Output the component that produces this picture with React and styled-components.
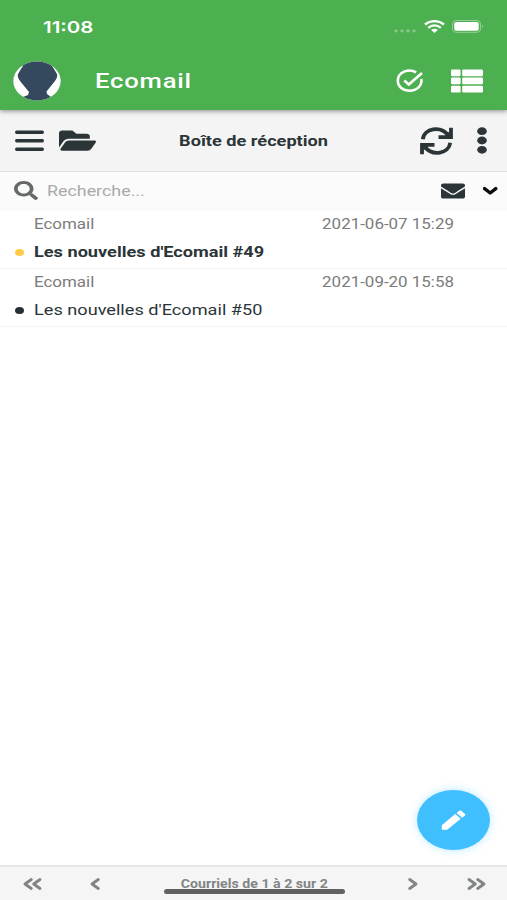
import React from "react";
import styled, { createGlobalStyle } from "styled-components";
import { FaFolderOpen, FaSearch, FaEnvelope } from "react-icons/fa";

const GlobalStyle = createGlobalStyle`
  *, *::before, *::after { box-sizing: border-box; }
  html, body { margin: 0; background: #fff; }
  body { font-family: Roboto, "Liberation Sans", sans-serif; color: #2b3538; }
`;

const Screen = styled.main`
  width: 507px;
  height: 900px;
  display: flex;
  flex-direction: column;
  position: relative;
  overflow: hidden;
  background: #fff;
`;

const Label = styled.span`
  display: block;
  flex: none;
  white-space: nowrap;
  font-size: ${(p) => p.$size || 14}px;
  line-height: 20px;
  font-weight: ${(p) => p.$weight || 400};
  color: ${(p) => p.$color || "inherit"};
  letter-spacing: ${(p) => p.$spacing || 0}px;
  transform: scaleX(${(p) => p.$stretch || 1.21});
  transform-origin: ${(p) => p.$origin || "left"} center;
`;

const Icon = styled.svg.attrs({ preserveAspectRatio: "none", "aria-hidden": true })`
  display: block;
  flex: none;
  width: ${(p) => p.$w}px;
  height: ${(p) => p.$h}px;
`;

const Header = styled.header`
  flex: none;
  height: 110px;
  background: #4caf50;
  color: #fff;
  box-shadow: 0 1px 5px rgba(0, 0, 0, 0.45);
  z-index: 1;
`;

const StatusBar = styled.div`
  height: 50px;
  padding: 3px 23px 0 43px;
  display: flex;
  align-items: center;
`;

const Time = styled(Label)`
  font-family: Inter, sans-serif;
  margin-right: auto;
`;

const SignalDots = styled(Icon)`
  margin: 9px 8px 0 0;
`;

const Wifi = styled(Icon)`
  margin-right: 7px;
`;

const AppBar = styled.div`
  height: 61px;
  padding: 0 23px 0 13px;
  display: flex;
  align-items: center;
`;

const Avatar = styled(Icon)`
  margin-right: 34px;
`;

const AppTitle = styled(Label)`
  margin-right: auto;
`;

const HeaderButton = styled.button`
  border: 0;
  padding: 0;
  background: none;
  color: inherit;
  flex: none;
  margin-left: ${(p) => p.$gap || 0}px;
`;

const Toolbar = styled.div`
  flex: none;
  height: 62px;
  padding: 0 20px 0 15px;
  display: grid;
  grid-template-columns: 96px 1fr 90px;
  align-items: center;
  background: #f4f4f4;
  border-bottom: 1px solid #dde0df;
`;

const ToolGroup = styled.div`
  display: flex;
  align-items: center;
  justify-content: ${(p) => (p.$end ? "flex-end" : "flex-start")};
  gap: ${(p) => p.$gap}px;
`;

const ToolTitle = styled(Label)`
  justify-self: center;
`;

const SearchBar = styled.div`
  flex: none;
  height: 39px;
  padding: 0 9px 2px 14px;
  display: flex;
  align-items: center;
  background: #fbfbfb;
`;

const SearchText = styled(Label)`
  margin: 0 auto 0 9px;
`;

const Message = styled.article`
  flex: none;
  height: 58px;
  padding: 3px 53px 0 15px;
  display: grid;
  grid-template-columns: 19px 1fr auto;
  grid-template-rows: 20px 20px;
  row-gap: 8px;
  align-items: center;
  border-bottom: 1px solid #f3f4f4;
`;

const Sender = styled(Label)`
  grid-column: 2;
`;

const Dot = styled.i`
  grid-column: 1;
  width: 9px;
  height: 7px;
  margin-top: 1px;
  border-radius: 50%;
  background: ${(p) => p.$color};
`;

const Subject = styled(Label)`
  grid-column: 2 / 4;
`;

const Blank = styled.div`
  flex: 1;
`;

const Compose = styled.button`
  position: absolute;
  right: 17px;
  bottom: 50px;
  width: 73px;
  height: 60px;
  padding: 0;
  border: 0;
  border-radius: 50%;
  background: #40bfff;
  color: #fff;
  display: grid;
  place-items: center;
  box-shadow: 0 0 10px rgba(64, 191, 255, 0.35);
`;

const Footer = styled.footer`
  flex: none;
  height: 35px;
  padding: 1px 21px 0 23px;
  border-top: 2px solid #e6e8e8;
  background: #f5f5f5;
  color: #828585;
  display: grid;
  grid-template-columns: 67px 20px 1fr 20px 68px;
  align-items: center;
`;

const PageStatus = styled(Label)`
  justify-self: center;
`;

const EndIcon = styled(Icon)`
  justify-self: end;
`;

const HomeIndicator = styled.div`
  position: absolute;
  left: 164px;
  bottom: 6px;
  width: 181px;
  height: 5px;
  border-radius: 3px;
  background: #626262;
`;

const stroke = { fill: "none", stroke: "currentColor", strokeLinecap: "round", strokeLinejoin: "round" };

const messages = [
  { sender: "Ecomail", date: "2021-06-07 15:29", subject: "Les nouvelles d'Ecomail #49", unread: true },
  { sender: "Ecomail", date: "2021-09-20 15:58", subject: "Les nouvelles d'Ecomail #50", unread: false },
];

export default function App() {
  return (
    <Screen>
      <GlobalStyle />
      <Header>
        <StatusBar>
          <Time $size={16.5} $weight={600} $stretch={1.24}>11:08</Time>
          <SignalDots $w={22} $h={4} viewBox="0 0 22 4" fill="#8bcb8d">
            <ellipse cx="2" cy="2" rx="1.7" ry="1.4" />
            <ellipse cx="8" cy="2" rx="1.7" ry="1.4" />
            <ellipse cx="14" cy="2" rx="1.7" ry="1.4" />
            <ellipse cx="20" cy="2" rx="1.7" ry="1.4" />
          </SignalDots>
          <Wifi $w={21} $h={13} viewBox="0 0 21 13">
            <g fill="none" stroke="#fff" strokeWidth="2.3">
              <path d="M1 4.5C6.5 .1 14.5 .1 20 4.5" />
              <path d="M4.2 7.8C8 4.7 13 4.7 16.8 7.8" />
            </g>
            <path d="M7.1 10C9 8.3 12 8.3 13.9 10L10.5 12.9Z" fill="#fff" />
          </Wifi>
          <Icon $w={32} $h={13} viewBox="0 0 32 13">
            <rect x=".5" y=".5" width="28" height="11.8" rx="3.5" fill="none" stroke="#94cf96" />
            <rect x="2.2" y="2" width="24.6" height="8.8" rx="2" fill="#fff" />
            <path d="M30 4.5Q32 6.3 30 8.3Z" fill="#94cf96" />
          </Icon>
        </StatusBar>
        <AppBar>
          <Avatar $w={48} $h={40} viewBox="0 0 48 40">
            <defs>
              <clipPath id="face"><ellipse cx="24" cy="20" rx="23.7" ry="19.6" /></clipPath>
            </defs>
            <g clipPath="url(#face)">
              <path fill="#fff" d="M0 0H48V40H0Z" />
              <path fill="#34495e" d="M4 0H44L39 5L41 8L44 13Q45 16 42 20L33.5 30.5L34 33L38 36V40H10V36L15 34L16 31L7 20Q4 16 5 13L8 8L10 5Z" />
            </g>
          </Avatar>
          <AppTitle $size={21} $weight={500} $stretch={1.22} $spacing={0.65}>Ecomail</AppTitle>
          <HeaderButton aria-label="Tout sélectionner">
            <Icon $w={28} $h={24} viewBox="0 0 28 24">
              <g {...stroke} strokeWidth="2.5" strokeLinecap="butt">
                <path d="M20.2 3.4C12.5-1.1 1.8 3.2 1.8 12C1.8 17.6 7 21.7 13.5 21.7C20.8 21.7 26.4 16.7 25.4 9.9" />
                <path strokeWidth="2.7" strokeLinejoin="miter" d="M8.3 11.6L12.8 15.5L26 4" />
              </g>
            </Icon>
          </HeaderButton>
          <HeaderButton $gap={27} aria-label="Affichage">
            <Icon $w={33} $h={24} viewBox="0 0 33 24" fill="#fff">
              <rect x="0" y="0.5" width="9.6" height="6.7" rx="1.2" />
              <rect x="11.2" y="0.5" width="20.8" height="6.7" rx="1.2" />
              <rect x="0" y="8.6" width="9.6" height="6.7" rx="1.2" />
              <rect x="11.2" y="8.6" width="20.8" height="6.7" rx="1.2" />
              <rect x="0" y="16.7" width="9.6" height="6.7" rx="1.2" />
              <rect x="11.2" y="16.7" width="20.8" height="6.7" rx="1.2" />
            </Icon>
          </HeaderButton>
        </AppBar>
      </Header>

      <Toolbar>
        <ToolGroup $gap={15}>
          <Icon $w={29} $h={22} viewBox="0 0 29 22">
            <path {...stroke} strokeWidth="3.4" d="M1.7 2.2H27.3M1.7 10.7H27.3M1.7 19.2H27.3" />
          </Icon>
          <Icon as={FaFolderOpen} preserveAspectRatio="none" $w={37} $h={27} />
        </ToolGroup>
        <ToolTitle $size={15} $weight={700} $origin="center">Boîte de réception</ToolTitle>
        <ToolGroup $gap={24} $end>
          <Icon $w={33} $h={28} viewBox="0 0 33 28">
            <g fill="none" stroke="currentColor" strokeWidth="3.8">
              <path d="M2.8 12.2C4 1.3 20.5-1.8 28.5 8.5" />
              <path d="M18.5 10.1H31V.8" />
              <path d="M30.2 15.8C29 26.7 12.5 29.8 4.5 19.5" />
              <path d="M14.5 17.9H2V27.2" />
            </g>
            <path fill="currentColor" d="M24 9.5L31 3V10ZM9 18.5L2 25V18Z" />
          </Icon>
          <Icon $w={10} $h={27} viewBox="0 0 10 27" fill="currentColor">
            <ellipse cx="5" cy="4.2" rx="4.8" ry="3.9" />
            <ellipse cx="5" cy="13.5" rx="4.8" ry="3.9" />
            <ellipse cx="5" cy="22.8" rx="4.8" ry="3.9" />
          </Icon>
        </ToolGroup>
      </Toolbar>

      <SearchBar>
        <Icon as={FaSearch} preserveAspectRatio="none" $w={24} $h={19} color="#656969" />
        <SearchText $size={15} $stretch={1.19} $color="#a9a9a9">Recherche...</SearchText>
        <ToolGroup $gap={17}>
          <Icon as={FaEnvelope} preserveAspectRatio="none" $w={24} $h={20} />
          <Icon $w={16} $h={10} viewBox="0 0 16 10">
            <path {...stroke} stroke="#080b0c" strokeWidth="3.3" d="M2.6 2.6L8.2 7L13.8 2.6" />
          </Icon>
        </ToolGroup>
      </SearchBar>

      {messages.map((m) => (
        <Message key={m.subject}>
          <Sender $color="#7b7c7c">{m.sender}</Sender>
          <Label $color="#7b7c7c" $origin="right">{m.date}</Label>
          <Dot $color={m.unread ? "#ffcb45" : "#263034"} />
          <Subject $size={15} $weight={m.unread ? 700 : 400}>{m.subject}</Subject>
        </Message>
      ))}

      <Blank />
      <Compose aria-label="Rédiger">
        <Icon $w={25} $h={21} viewBox="0 0 25 21" fill="currentColor">
          <path d="M.8 15.2L14.2 4.1L19.7 8.7L6.2 19.8H1.5Q.8 19.8 .8 19.2Z" />
          <path d="M15.5 3L18.2.8Q19.2 0 20.3.8L24 3.9Q25 4.8 24 5.6L21.1 7.7Z" />
        </Icon>
      </Compose>

      <Footer>
        <Icon $w={19} $h={12} viewBox="0 0 19 12">
          <path {...stroke} strokeWidth="2.8" d="M8.3 1.5L2 6L8.3 10.5M17 1.5L10.7 6L17 10.5" />
        </Icon>
        <Icon $w={10} $h={12} viewBox="0 0 10 12">
          <path {...stroke} strokeWidth="2.8" d="M8.3 1.5L2 6L8.3 10.5" />
        </Icon>
        <PageStatus $size={12} $weight={700} $stretch={1.18} $origin="center">Courriels de 1 à 2 sur 2</PageStatus>
        <EndIcon $w={10} $h={12} viewBox="0 0 10 12">
          <path {...stroke} strokeWidth="2.8" d="M1.7 1.5L8 6L1.7 10.5" />
        </EndIcon>
        <EndIcon $w={19} $h={12} viewBox="0 0 19 12">
          <path {...stroke} strokeWidth="2.8" d="M2 1.5L8.3 6L2 10.5M10.7 1.5L17 6L10.7 10.5" />
        </EndIcon>
      </Footer>
      <HomeIndicator />
    </Screen>
  );
}
